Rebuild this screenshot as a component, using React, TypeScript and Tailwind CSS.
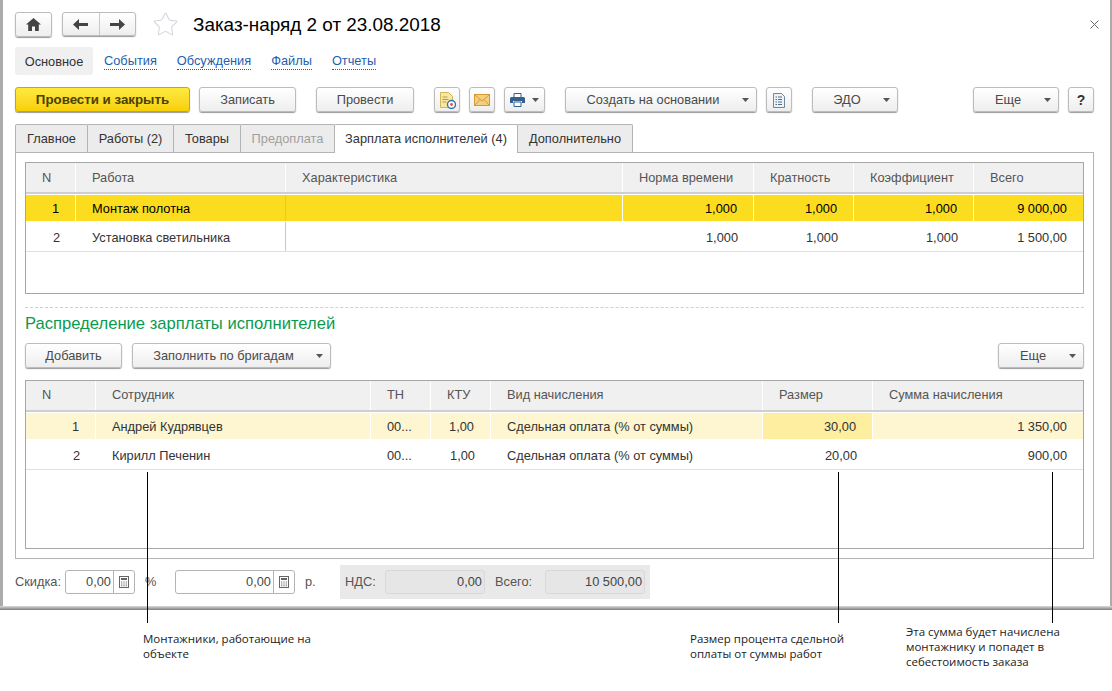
import { ReactNode } from 'react';
import { Star } from 'lucide-react';

const Caret = () => (
  <svg width="7" height="4" viewBox="0 0 7 4" className="shrink-0">
    <path d="M0 0h7L3.5 4z" fill="#555" />
  </svg>
);

const Btn = ({ className = '', children }: { className?: string; children: ReactNode }) => (
  <div className={`flex items-center justify-center h-[25px] pt-[1px] shrink-0 rounded-[3px] border border-[#bcbcbc] bg-gradient-to-b from-white to-[#eeeeee] text-[#4a4a4a] shadow-[0_1px_1px_rgba(0,0,0,0.4)] ${className}`}>
    {children}
  </div>
);

const MenuBtn = ({ className = '', label }: { className?: string; label: string }) => (
  <Btn className={`pr-[7px] ${className}`}>
    <span className="flex-1 text-center pr-[2px]">{label}</span>
    <Caret />
  </Btn>
);

const Calc = () => (
  <svg width="10" height="12" viewBox="0 0 10 12">
    <rect x="0.5" y="0.5" width="9" height="11" fill="#fff" stroke="#666" />
    <rect x="2" y="2" width="6" height="2" fill="#666" />
    <path d="M2 5.5h1.3v1H2zM4.4 5.5h1.3v1H4.4zM6.7 5.5H8v1H6.7zM2 7.5h1.3v1H2zM4.4 7.5h1.3v1H4.4zM6.7 7.5H8v1H6.7zM2 9.2h1.3v1H2zM4.4 9.2h1.3v1H4.4zM6.7 9.2H8v1H6.7z" fill="#777" />
  </svg>
);

const Field = ({ className = '', value }: { className?: string; value: string }) => (
  <div className={`flex h-[24px] rounded-[3px] border border-[#b4b4b4] bg-white text-[#4a4a4a] ${className}`}>
    <span className="flex-1 flex items-center justify-end pr-[2px] pt-[1px]">{value}</span>
    <span className="flex items-center justify-center w-[21px] border-l border-[#b4b4b4]">
      <Calc />
    </span>
  </div>
);

const ReadOnly = ({ className = '', value }: { className?: string; value: string }) => (
  <div className={`flex items-center justify-end h-[24px] pr-[2px] pt-[1px] rounded-[3px] border border-[#d8d8d8] bg-[#e6e6e6] text-[#444] ${className}`}>
    {value}
  </div>
);

const grid1 = 'grid grid-cols-[50px_210px_337px_131px_100px_120px_109px]';
const grid2 = 'grid grid-cols-[70px_275px_60px_60px_272px_110px_210px]';

const HeadCell = ({ className = '', children }: { className?: string; children: ReactNode }) => (
  <div className={`flex items-center pl-[16px] bg-[#f0f0f0] text-[#555] border-r border-white last:border-r-0 ${className}`}>{children}</div>
);

const Cell = ({ className = '', right, first, children }: { className?: string; right?: boolean; first?: boolean; children?: ReactNode }) => (
  <div className={`flex items-center whitespace-nowrap ${first ? 'pt-[2px]' : 'pt-[4px]'} ${right ? 'justify-end pr-[16px]' : 'pl-[16px]'} ${className}`}>{children}</div>
);

const work = [
  ['1', 'Монтаж полотна', '', '1,000', '1,000', '1,000', '9 000,00'],
  ['2', 'Установка светильника', '', '1,000', '1,000', '1,000', '1 500,00'],
];

const staff = [
  ['1', 'Андрей Кудрявцев', '00...', '1,00', 'Сдельная оплата (% от суммы)', '30,00', '1 350,00'],
  ['2', 'Кирилл Печенин', '00...', '1,00', 'Сдельная оплата (% от суммы)', '20,00', '900,00'],
];

const tabs = [
  { label: 'Главное', w: 'w-[73px]', cls: 'bg-[#ececec] text-[#333]' },
  { label: 'Работы (2)', w: 'w-[87px]', cls: 'bg-[#ececec] text-[#333]' },
  { label: 'Товары', w: 'w-[68px]', cls: 'bg-[#ececec] text-[#333]' },
  { label: 'Предоплата', w: 'w-[95px]', cls: 'bg-[#ececec] text-[#a0a0a0]' },
  { label: 'Зарплата исполнителей (4)', w: 'w-[184px]', cls: 'bg-white text-[#333] h-[29px] relative z-10' },
  { label: 'Дополнительно', w: 'w-[116px]', cls: 'bg-[#ececec] text-[#333]' },
];

const links = ['События', 'Обсуждения', 'Файлы', 'Отчеты'];

export default function App() {
  return (
    <div className="relative w-[1112px] h-[691px] overflow-hidden bg-white font-['Liberation_Sans',Arial,sans-serif] text-[12.8px] leading-none">
      <div className="flex flex-col h-[610px]">
        <div className="flex-1 flex flex-col pl-[12px] pr-[16px] pt-[12px] border-l-[3px] border-r-[2px] border-[#ababab]">
          {/* Title */}
          <div className="flex items-center h-[24px]">
            <Btn className="w-[37px] h-[24px]">
              <svg width="15" height="13" viewBox="0 0 15 13">
                <path d="M7.5 0L15 6.6h-2.2V13H9V8.5H6V13H2.2V6.6H0z" fill="#444" />
              </svg>
            </Btn>
            <div className="flex ml-[10px] h-[24px] w-[74px] rounded-[3px] border border-[#bcbcbc] bg-gradient-to-b from-white to-[#eeeeee] shadow-[0_1px_1px_rgba(0,0,0,0.4)]">
              <div className="flex-1 flex items-center justify-center border-r border-[#c8c8c8]">
                <svg width="15" height="11" viewBox="0 0 15 11">
                  <path d="M0 5.5L6 0v4h9v3H6v4z" fill="#444" />
                </svg>
              </div>
              <div className="flex-1 flex items-center justify-center">
                <svg width="15" height="11" viewBox="0 0 15 11">
                  <path d="M15 5.5L9 0v4H0v3h9v4z" fill="#444" />
                </svg>
              </div>
            </div>
            <Star className="ml-[16px] w-[27px] h-[27px] text-[#d0d4da]" strokeWidth={0.9} />
            <span className="ml-[14px] pt-[2px] text-[18.9px] text-black">Заказ-наряд 2 от 23.08.2018</span>
            <svg width="9" height="9" viewBox="0 0 9 9" className="ml-auto mr-[-5px]">
              <path d="M0.5 0.5l8 8M8.5 0.5l-8 8" stroke="#666" strokeWidth="1" />
            </svg>
          </div>

          {/* Sections */}
          <div className="flex items-center h-[28px] mt-[11px]">
            <div className="flex items-center justify-center w-[78px] h-full pt-[2px] rounded-[3px] bg-[#f0f0f0] text-[#333]">Основное</div>
            {links.map((l, i) => (
              <span
                key={l}
                className={`mt-[3px] text-[#1c5fb0] border-b border-dotted border-[#1c5fb0] pb-[1px] ${i === 0 ? 'ml-[11px]' : 'ml-[20px]'}`}
              >
                {l}
              </span>
            ))}
          </div>

          {/* Toolbar */}
          <div className="flex items-center h-[25px] mt-[12px]">
            <div className="flex items-center justify-center w-[175px] h-[25px] pt-[1px] rounded-[3px] border border-[#c9a800] bg-gradient-to-b from-[#ffe93d] to-[#f8d000] font-bold text-[13.3px] text-[#4a4200] shadow-[0_1px_1px_rgba(0,0,0,0.4)]">
              Провести и закрыть
            </div>
            <Btn className="w-[97px] ml-[9px]">Записать</Btn>
            <Btn className="w-[98px] ml-[20px]">Провести</Btn>
            <Btn className="w-[26px] ml-[20px]">
              <svg width="17" height="17" viewBox="0 0 17 17">
                <path d="M1.5 0.5h8l4 4v11h-12z" fill="#f7e7a6" stroke="#d6b654" />
                <path d="M3.5 5h5M3.5 7.5h6M3.5 10h4" stroke="#b99a3e" />
                <circle cx="12.5" cy="12.5" r="4" fill="#fff" stroke="#3c6ea8" strokeWidth="1.4" />
                <circle cx="12.5" cy="12.5" r="1.4" fill="#d9534f" />
              </svg>
            </Btn>
            <Btn className="w-[26px] ml-[9px]">
              <svg width="16" height="12" viewBox="0 0 16 12">
                <rect x="0.5" y="0.5" width="15" height="11" fill="#f6cf7e" stroke="#d49a3a" />
                <path d="M0.5 0.5L8 7l7.5-6.5M0.5 11.5L6 5.5M15.5 11.5L10 5.5" fill="none" stroke="#d49a3a" />
              </svg>
            </Btn>
            <Btn className="w-[41px] ml-[9px] gap-[7px]">
              <svg width="15" height="14" viewBox="0 0 15 14">
                <path d="M4 0.5h7v4H4z" fill="#fff" stroke="#33608f" />
                <path d="M1.5 4h12A1.5 1.5 0 0 1 15 5.5V10h-3v-2H3v2H0V5.5A1.5 1.5 0 0 1 1.5 4z" fill="#33608f" />
                <path d="M4 9h7v4.5H4z" fill="#fff" stroke="#33608f" />
              </svg>
              <Caret />
            </Btn>
            <MenuBtn className="w-[192px] ml-[20px]" label="Создать на основании" />
            <Btn className="w-[26px] ml-[9px]">
              <svg width="12" height="15" viewBox="0 0 12 15">
                <path d="M0.5 0.5h8l3 3v11h-11z" fill="#eef3f8" stroke="#71859b" />
                <path d="M2.5 4h1.5M5 4h4M2.5 6.5H4M5 6.5h4M2.5 9H4M5 9h4M2.5 11.5H4M5 11.5h4" stroke="#4d6f92" />
              </svg>
            </Btn>
            <MenuBtn className="w-[86px] ml-[20px]" label="ЭДО" />
            <MenuBtn className="w-[86px] ml-auto" label="Еще" />
            <Btn className="w-[26px] ml-[9px] font-bold text-[14px] text-[#333]">?</Btn>
          </div>

          {/* Tabs */}
          <div className="flex items-start h-[28px] mt-[12px]">
            {tabs.map((t, i) => (
              <div
                key={t.label}
                className={`flex items-center justify-center h-[28px] pt-[1px] border border-[#b4b4b4] rounded-t-[2px] border-b-0 ${i > 0 ? '-ml-px' : ''} ${t.w} ${t.cls}`}
              >
                {t.label}
              </div>
            ))}
          </div>

          <div className="flex flex-col h-[407px] px-[9px] pt-[9px] border border-[#b4b4b4] text-[#333]">
            {/* Works table */}
            <div className="h-[132px] shrink-0 border border-[#a6a6a6]">
              <div className={`${grid1} h-[31px] border-b-2 border-[#cfcfcf]`}>
                {['N', 'Работа', 'Характеристика', 'Норма времени', 'Кратность', 'Коэффициент', 'Всего'].map((h) => (
                  <HeadCell key={h} className="pt-[2px]">{h}</HeadCell>
                ))}
              </div>
              {work.map((r, i) => (
                <div
                  key={r[0]}
                  className={`${grid1} ${i === 0 ? 'h-[27px] mt-px bg-[#fcdc1e] text-black border-b border-white' : 'h-[30px] border-b border-[#dfdfdf]'}`}
                >
                  <Cell right first={i === 0} className={i === 0 ? 'border-r border-white' : ''}>{r[0]}</Cell>
                  <Cell first={i === 0} className={i === 0 ? 'border-r border-[#e9cb1c]' : 'border-r border-[#c8c8c8]'}>{r[1]}</Cell>
                  <Cell first={i === 0} className={i === 0 ? 'border-r border-white' : ''} />
                  <Cell right first={i === 0} className={i === 0 ? 'border-r border-white' : ''}>{r[3]}</Cell>
                  <Cell right first={i === 0} className={i === 0 ? 'border-r border-white' : ''}>{r[4]}</Cell>
                  <Cell right first={i === 0} className={i === 0 ? 'border-r border-white' : ''}>{r[5]}</Cell>
                  <Cell right first={i === 0}>{r[6]}</Cell>
                </div>
              ))}
            </div>

            <div className="mt-[13px] border-t border-dashed border-[#cfcfcf]" />
            <div className="mt-[6px] h-[20px] flex items-center text-[16.6px] text-[#0a9a50]">Распределение зарплаты исполнителей</div>

            <div className="flex mt-[9px]">
              <Btn className="w-[97px]">Добавить</Btn>
              <MenuBtn className="w-[199px] ml-[10px]" label="Заполнить по бригадам" />
              <MenuBtn className="w-[86px] ml-auto" label="Еще" />
            </div>

            {/* Staff table */}
            <div className="mt-[12px] h-[169px] shrink-0 border border-[#a6a6a6]">
              <div className={`${grid2} h-[31px] border-b-2 border-[#cfcfcf]`}>
                {['N', 'Сотрудник', 'ТН', 'КТУ', 'Вид начисления', 'Размер', 'Сумма начисления'].map((h) => (
                  <HeadCell key={h}>{h}</HeadCell>
                ))}
              </div>
              {staff.map((r, i) => (
                <div
                  key={r[0]}
                  className={`${grid2} ${i === 0 ? 'h-[27px] mt-px bg-[#fdf6d0] border-b border-white' : 'h-[30px] border-b border-[#dfdfdf]'}`}
                >
                  <Cell right first={i === 0} className={i === 0 ? 'border-r border-white' : ''}>{r[0]}</Cell>
                  <Cell first={i === 0} className={i === 0 ? 'border-r border-white' : ''}>{r[1]}</Cell>
                  <Cell first={i === 0} className={i === 0 ? 'border-r border-white' : ''}>{r[2]}</Cell>
                  <Cell right first={i === 0} className={i === 0 ? 'border-r border-white' : ''}>{r[3]}</Cell>
                  <Cell first={i === 0} className={i === 0 ? 'border-r border-white' : ''}>{r[4]}</Cell>
                  <Cell right first={i === 0} className={i === 0 ? 'border-r border-white bg-[#fdeea0]' : ''}>{r[5]}</Cell>
                  <Cell right first={i === 0}>{r[6]}</Cell>
                </div>
              ))}
            </div>
          </div>

          {/* Totals */}
          <div className="flex items-center mt-[6px] text-[#555]">
            <span className="w-[50px] pt-[1px]">Скидка:</span>
            <Field className="w-[70px]" value="0,00" />
            <span className="w-[12px] ml-[10px] pt-[1px]">%</span>
            <Field className="w-[120px] ml-[18px]" value="0,00" />
            <span className="w-[11px] ml-[10px] pt-[1px]">р.</span>
            <div className="flex items-center w-[310px] h-[34px] ml-[24px] px-[5px] bg-[#e9e9e9]">
              <span className="w-[40px] pt-[1px]">НДС:</span>
              <ReadOnly className="w-[100px]" value="0,00" />
              <span className="w-[60px] pl-[10px] pt-[1px]">Всего:</span>
              <ReadOnly className="w-[100px]" value="10 500,00" />
            </div>
          </div>
        </div>
        <div className="h-[4px] bg-gradient-to-b from-[#dcdcdc] to-[#7f7f7f]" />
      </div>

      {/* Callouts */}
      <div className="grid grid-cols-[143px_547px_216px_1fr] font-['Open_Sans',sans-serif] text-[11.5px] leading-[15px] text-[#222]">
        <div />
        <div className="pt-[21px]">
          Монтажники, работающие на
          <br />
          объекте
        </div>
        <div className="pt-[21px]">
          Размер процента сдельной
          <br />
          оплаты от суммы работ
        </div>
        <div className="pt-[14px]">
          Эта сумма будет начислена
          <br />
          монтажнику и попадет в
          <br />
          себестоимость заказа
        </div>
      </div>
      <div className="absolute left-[147px] top-[472px] w-px h-[151px] bg-black" />
      <div className="absolute left-[838px] top-[472px] w-px h-[151px] bg-black" />
      <div className="absolute left-[1052px] top-[472px] w-px h-[151px] bg-black" />
    </div>
  );
}
